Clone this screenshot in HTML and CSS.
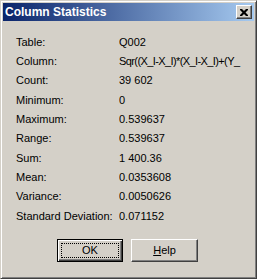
FILE: index.html
```html
<!DOCTYPE html>
<html lang="en">
<head>
    <meta charset="UTF-8">
    <title>Column Statistics</title>
    <link rel="stylesheet" href="styles.css">
</head>
<body>
    <div class="dialog">
        <div class="titlebar">
            <span class="title">Column Statistics</span>
            <button class="close" type="button">
                <svg width="8" height="7" viewBox="0 0 8 7">
                    <path d="M0 0h2l2 2 2-2h2v1l-2.5 2.5L8 6v1H6L4 5 2 7H0V6l2.5-2.5L0 1z" fill="#000"/>
                </svg>
            </button>
        </div>
        <div class="stats">
            <div class="row"><span class="label">Table:</span><span class="value">Q002</span></div>
            <div class="row"><span class="label">Column:</span><span class="value narrow">Sqr((X_I-X_I)*(X_I-X_I)+(Y_</span></div>
            <div class="row"><span class="label">Count:</span><span class="value">39 602</span></div>
            <div class="row"><span class="label">Minimum:</span><span class="value">0</span></div>
            <div class="row"><span class="label">Maximum:</span><span class="value">0.539637</span></div>
            <div class="row"><span class="label">Range:</span><span class="value">0.539637</span></div>
            <div class="row"><span class="label">Sum:</span><span class="value">1 400.36</span></div>
            <div class="row"><span class="label">Mean:</span><span class="value">0.0353608</span></div>
            <div class="row"><span class="label">Variance:</span><span class="value">0.0050626</span></div>
            <div class="row"><span class="label">Standard Deviation:</span><span class="value">0.071152</span></div>
        </div>
        <div class="buttons">
            <button class="btn default" type="button"><span class="focus">OK</span></button>
            <button class="btn" type="button"><span class="focus"><u>H</u>elp</span></button>
        </div>
    </div>
</body>
</html>
```

FILE: styles.css
```css
body {
    margin: 0;
    background-color: #d4d0c8;
    font-family: 'Liberation Sans', Arial, sans-serif;
    font-size: 11px;
    color: #000;
}
.dialog {
    box-sizing: border-box;
    width: 257px;
    height: 279px;
    padding: 2px;
    background-color: #d4d0c8;
    border: 1px solid;
    border-color: #d4d0c8 #404040 #404040 #d4d0c8;
    box-shadow: inset 1px 1px #fff, inset -1px -1px #808080;
}
.titlebar {
    height: 18px;
    display: flex;
    align-items: center;
    justify-content: space-between;
    padding: 0 2px 0 2px;
    background: linear-gradient(to right, #0a246a, #a6caf0);
}
.title {
    color: #fff;
    font-weight: bold;
    font-size: 12px;
}
.close {
    box-sizing: border-box;
    width: 16px;
    height: 14px;
    padding: 0;
    display: flex;
    align-items: center;
    justify-content: center;
    background-color: #d4d0c8;
    border: 1px solid;
    border-color: #fff #404040 #404040 #fff;
    box-shadow: inset -1px -1px #808080;
}
.stats {
    padding: 11px 13px 0 13px;
}
.row {
    display: grid;
    grid-template-columns: 103px 124px;
    height: 19.33px;
    align-items: center;
    white-space: nowrap;
}
.value {
    overflow: hidden;
}
.narrow {
    letter-spacing: -0.6px;
}
.buttons {
    display: flex;
    gap: 8px;
    padding: 14px 0 0 54px;
}
.btn {
    box-sizing: border-box;
    width: 67px;
    height: 23px;
    padding: 3px;
    font-family: inherit;
    font-size: 11px;
    background-color: #d4d0c8;
    border: 1px solid;
    border-color: #fff #404040 #404040 #fff;
    box-shadow: inset -1px -1px #808080;
}
.btn.default {
    width: 66px;
    border: 1px solid #000;
    box-shadow: inset 1px 1px #fff, inset -1px -1px #404040, inset -2px -2px #808080;
}
.focus {
    display: block;
    height: 100%;
    box-sizing: border-box;
    line-height: 13px;
    border: 1px dotted transparent;
}
.btn.default .focus {
    border-color: #000;
}
```
